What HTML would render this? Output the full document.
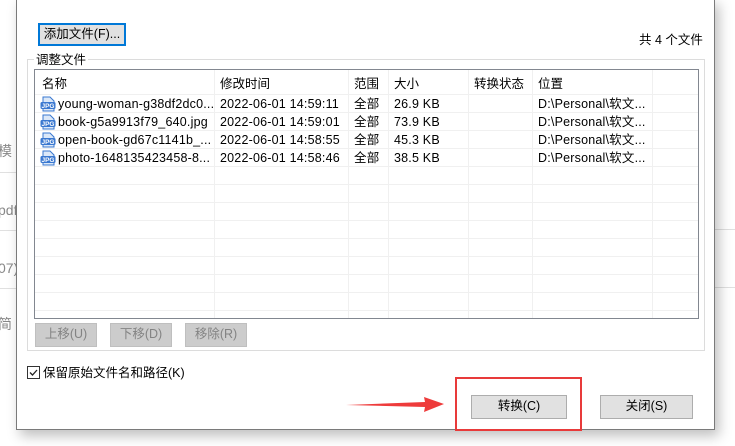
<!DOCTYPE html>
<html><head><meta charset="utf-8"><style>
*{margin:0;padding:0;box-sizing:border-box}
body{width:735px;height:446px;background:#f3f3f3;position:relative;overflow:hidden;font-family:"Liberation Sans","Noto Sans CJK SC",sans-serif;font-size:12.5px;color:#000}
.abs{position:absolute}
.bg{left:0;top:0;width:735px;height:446px;background:#fff}
.dlg{left:16px;top:-2px;width:699px;height:432px;background:#fff;border:1px solid #7a7a7a;box-shadow:4px 6px 12px rgba(0,0,0,.25)}
.t{position:absolute;white-space:nowrap;line-height:14px}
.btn{position:absolute;border:1px solid #adadad;background:#e1e1e1;text-align:center;line-height:21px;font-size:12.5px}
.dis{background:#ccc;color:#838383;border-color:#bfbfbf}
.hl{position:absolute;background:#f0f0f0;height:1px}
.vl{position:absolute;background:#f0f0f0;width:1px}
</style></head><body>
<div class="abs bg"></div>
<div class="abs" style="left:0;top:172px;width:16px;height:1px;background:#e0e0e0"></div>
<div class="abs" style="left:0;top:230px;width:16px;height:1px;background:#e0e0e0"></div>
<div class="abs" style="left:0;top:288px;width:16px;height:1px;background:#e0e0e0"></div>
<div class="abs" style="left:715px;top:229px;width:20px;height:1px;background:#e0e0e0"></div>
<div class="abs" style="left:715px;top:287px;width:20px;height:1px;background:#e0e0e0"></div>
<div class="t" style="left:-2px;top:144px;color:#888;font-size:14px">模</div>
<div class="t" style="left:-2px;top:203px;color:#888;font-size:14px">pdf</div>
<div class="t" style="left:-2px;top:261px;color:#888;font-size:14px">07)</div>
<div class="t" style="left:-2px;top:317px;color:#888;font-size:14px">简</div>
<div class="abs dlg"></div>

<div class="btn" style="left:38px;top:23px;width:88px;height:23px;border:2px solid #0078d7;line-height:19px">添加文件(F)...</div>
<div class="t" style="left:639px;top:33px">共 4 个文件</div>

<div class="abs" style="left:27px;top:59px;width:678px;height:292px;border:1px solid #dcdcdc"></div>
<div class="t" style="left:34px;top:53px;background:#fff;padding:0 2px">调整文件</div>

<div class="abs" style="left:34px;top:69px;width:665px;height:250px;border:1px solid #828790;background:#fff;overflow:hidden">
 <div class="vl" style="left:179px;top:0;height:250px"></div>
 <div class="vl" style="left:313px;top:0;height:250px"></div>
 <div class="vl" style="left:353px;top:0;height:250px"></div>
 <div class="vl" style="left:433px;top:0;height:250px"></div>
 <div class="vl" style="left:497px;top:0;height:250px"></div>
 <div class="vl" style="left:617px;top:0;height:250px"></div>
 <div class="hl" style="left:0;top:24px;width:663px"></div>
 <div class="hl" style="left:0;top:42px;width:663px"></div>
 <div class="hl" style="left:0;top:60px;width:663px"></div>
 <div class="hl" style="left:0;top:78px;width:663px"></div>
 <div class="hl" style="left:0;top:96px;width:663px"></div>
 <div class="hl" style="left:0;top:114px;width:663px"></div>
 <div class="hl" style="left:0;top:132px;width:663px"></div>
 <div class="hl" style="left:0;top:150px;width:663px"></div>
 <div class="hl" style="left:0;top:168px;width:663px"></div>
 <div class="hl" style="left:0;top:186px;width:663px"></div>
 <div class="hl" style="left:0;top:204px;width:663px"></div>
 <div class="hl" style="left:0;top:222px;width:663px"></div>
 <div class="hl" style="left:0;top:240px;width:663px"></div>
 <div class="t" style="left:7px;top:7px">名称</div>
 <div class="t" style="left:185px;top:7px">修改时间</div>
 <div class="t" style="left:319px;top:7px">范围</div>
 <div class="t" style="left:359px;top:7px">大小</div>
 <div class="t" style="left:439px;top:7px">转换状态</div>
 <div class="t" style="left:503px;top:7px">位置</div>
</div>

<svg width="0" height="0" style="position:absolute"><defs><g id="ic"><path d="M3 1h7l4 4v10H3z" fill="#dbe8f8" stroke="#3a78d0"/><rect x="0.5" y="6" width="15" height="7" rx="1.5" fill="#3a78d0"/><text x="8" y="12" font-size="6.5" fill="#fff" text-anchor="middle" font-family="Liberation Sans" font-weight="bold">JPG</text></g></defs></svg>

<div class="abs" style="left:0;top:0">
 <svg class="abs" style="left:40px;top:96px" width="16" height="16"><use href="#ic"/></svg>
 <svg class="abs" style="left:40px;top:114px" width="16" height="16"><use href="#ic"/></svg>
 <svg class="abs" style="left:40px;top:132px" width="16" height="16"><use href="#ic"/></svg>
 <svg class="abs" style="left:40px;top:150px" width="16" height="16"><use href="#ic"/></svg>
</div>
<div style="letter-spacing:0.2px">
<div class="t" style="left:58px;top:97px">young-woman-g38df2dc0...</div>
<div class="t" style="left:58px;top:115px">book-g5a9913f79_640.jpg</div>
<div class="t" style="left:58px;top:133px">open-book-gd67c1141b_...</div>
<div class="t" style="left:58px;top:151px">photo-1648135423458-8...</div>
<div class="t" style="left:220px;top:97px">2022-06-01 14:59:11</div>
<div class="t" style="left:220px;top:115px">2022-06-01 14:59:01</div>
<div class="t" style="left:220px;top:133px">2022-06-01 14:58:55</div>
<div class="t" style="left:220px;top:151px">2022-06-01 14:58:46</div>
<div class="t" style="left:354px;top:97px">全部</div>
<div class="t" style="left:354px;top:115px">全部</div>
<div class="t" style="left:354px;top:133px">全部</div>
<div class="t" style="left:354px;top:151px">全部</div>
<div class="t" style="left:394px;top:97px">26.9 KB</div>
<div class="t" style="left:394px;top:115px">73.9 KB</div>
<div class="t" style="left:394px;top:133px">45.3 KB</div>
<div class="t" style="left:394px;top:151px">38.5 KB</div>
<div class="t" style="left:538px;top:97px">D:\Personal\软文...</div>
<div class="t" style="left:538px;top:115px">D:\Personal\软文...</div>
<div class="t" style="left:538px;top:133px">D:\Personal\软文...</div>
<div class="t" style="left:538px;top:151px">D:\Personal\软文...</div>
</div>

<div class="btn dis" style="left:35px;top:323px;width:62px;height:24px">上移(U)</div>
<div class="btn dis" style="left:110px;top:323px;width:62px;height:24px">下移(D)</div>
<div class="btn dis" style="left:185px;top:323px;width:62px;height:24px">移除(R)</div>

<div class="abs" style="left:27px;top:366px;width:13px;height:13px;border:1px solid #333;background:#fff"></div>
<svg class="abs" style="left:27px;top:366px" width="13" height="13"><path d="M3 6.5l2.5 2.5 4.5-5" fill="none" stroke="#222" stroke-width="1.3"/></svg>
<div class="t" style="left:43px;top:366px">保留原始文件名和路径(K)</div>

<div class="btn" style="left:471px;top:395px;width:96px;height:24px">转换(C)</div>
<div class="btn" style="left:600px;top:395px;width:93px;height:24px">关闭(S)</div>
<div class="abs" style="left:455px;top:377px;width:127px;height:54px;border:2px solid #e83a3a"></div>
<svg class="abs" style="left:340px;top:394px" width="110" height="22"><path d="M6 11 L85 8 L84 3 L104 10 L84 18 L85 13 Z" fill="#ee3b3b"/></svg>
</body></html>
